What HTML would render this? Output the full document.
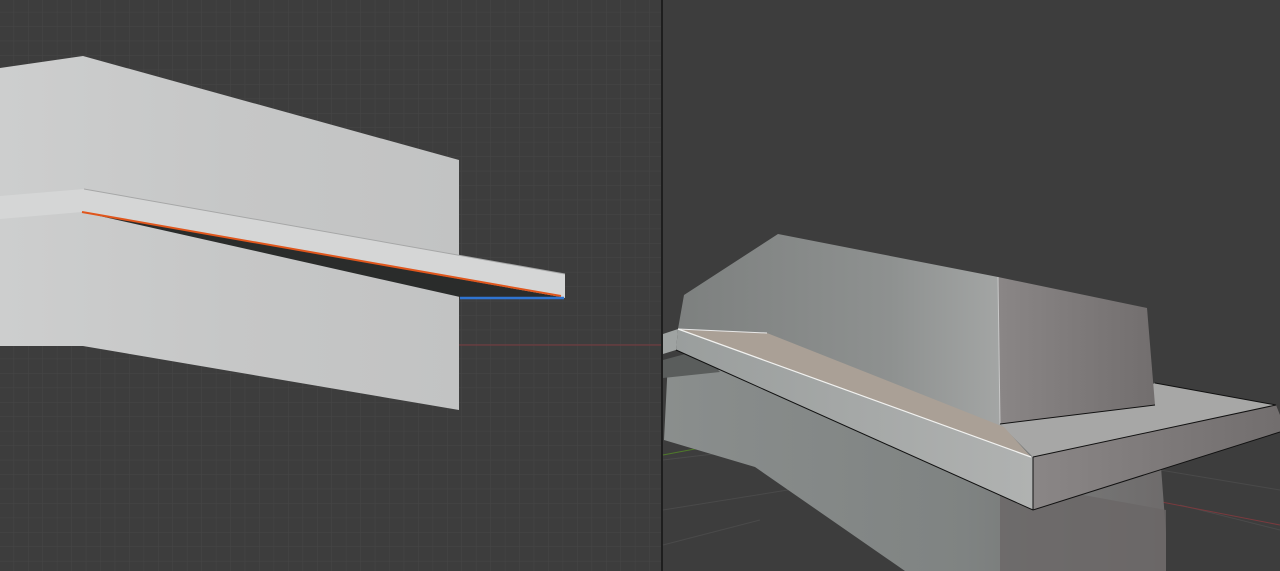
<!DOCTYPE html>
<html><head><meta charset="utf-8"><style>
html,body{margin:0;padding:0;background:#3d3d3d;overflow:hidden;width:1280px;height:571px}
svg{display:block}
</style></head><body>
<svg width="1280" height="571" viewBox="0 0 1280 571" xmlns="http://www.w3.org/2000/svg">
<defs>
<pattern id="g" x="-0.9" y="-2.6" width="14.45" height="14.45" patternUnits="userSpaceOnUse">
<path d="M0 0H14.45M0 0V14.45" stroke="#464646" stroke-width="1" fill="none"/>
</pattern>
<linearGradient id="wall" x1="0" y1="0" x2="1" y2="0">
<stop offset="0" stop-color="#cdcece"/><stop offset="0.5" stop-color="#c6c7c7"/><stop offset="1" stop-color="#c2c3c3"/>
</linearGradient>
<linearGradient id="box1" x1="0" y1="0" x2="1" y2="0">
<stop offset="0" stop-color="#7d807f"/><stop offset="0.6" stop-color="#8e9190"/><stop offset="1" stop-color="#a9abaa"/>
</linearGradient>
<linearGradient id="box2" x1="0" y1="0" x2="1" y2="0">
<stop offset="0" stop-color="#8a8686"/><stop offset="1" stop-color="#726e6e"/>
</linearGradient>
<linearGradient id="front" x1="0" y1="0" x2="1" y2="0">
<stop offset="0" stop-color="#9a9e9d"/><stop offset="1" stop-color="#b0b2b1"/>
</linearGradient>
<linearGradient id="refl" x1="0" y1="0" x2="1" y2="0">
<stop offset="0" stop-color="#8a8e8d"/><stop offset="0.6" stop-color="#7f8382"/><stop offset="1" stop-color="#6e6b6b"/>
</linearGradient>
</defs>
<rect x="0" y="0" width="661" height="571" fill="#3d3d3d"/>
<rect x="0" y="0" width="661" height="571" fill="url(#g)"/>
<line x1="459" y1="345" x2="661" y2="345" stroke="#7a3a3e" stroke-width="1"/>
<polygon points="0,68 83,56 459,160 459,410 83,346 0,346" fill="url(#wall)"/>
<polygon points="82,212 561,297 460,297" fill="#2a2c2b"/>
<polygon points="0,196 84,189 565,274 565,298 561,297 82,212 0,219" fill="#d5d6d6"/>
<line x1="84" y1="189" x2="565" y2="274" stroke="#a6a7a7" stroke-width="1"/>
<line x1="82" y1="212" x2="561" y2="296" stroke="#e0561c" stroke-width="2"/>
<line x1="460" y1="298" x2="564" y2="298" stroke="#2f74d0" stroke-width="2.5"/>
<rect x="661" y="0" width="2" height="571" fill="#1e1e1e"/>
<rect x="663" y="0" width="617" height="571" fill="#3d3d3d"/>
<g stroke="#4a4a4a" stroke-width="1" fill="none">
<line x1="663" y1="460" x2="1000" y2="420"/>
<line x1="663" y1="510" x2="1100" y2="440"/>
<line x1="663" y1="545" x2="760" y2="520"/>
<line x1="1160" y1="470" x2="1280" y2="490"/>
<line x1="1180" y1="505" x2="1280" y2="530"/>
<line x1="1200" y1="440" x2="1280" y2="430"/>
</g>
<line x1="1100" y1="490" x2="1280" y2="525" stroke="#7a3a3e" stroke-width="1"/>
<line x1="663" y1="455" x2="700" y2="448" stroke="#4f7a2a" stroke-width="1"/>
<polygon points="668,360 1000,424 1161,467 1166,533 1166,571 905,571 755,467 664,440" fill="url(#refl)"/>
<polygon points="1000,480 1166,510 1166,571 1000,571" fill="#6a6666" opacity="0.8"/>
<polygon points="663,360 700,350 720,372 663,378" fill="#5a5d5c"/>
<!-- right ledge top (behind box) -->
<polygon points="1000,424 1156,383 1276,405 1033,457" fill="#a7a7a6"/>
<!-- upper box -->
<polygon points="778,234 998,277 1000,424 1031,457 678,329 684,295" fill="url(#box1)"/>
<polygon points="998,277 1147,308 1155,405 1000,424" fill="url(#box2)"/>
<line x1="998" y1="277" x2="1000" y2="424" stroke="#c8c8c8" stroke-width="1"/>
<polygon points="1033,457 1276,405 1280,415 1280,432 1033,510" fill="url(#box2)"/>
<polygon points="678,329 1033,457 1033,510 676,350" fill="url(#front)"/>
<polygon points="678,329 767,333 1004,427 1031,457" fill="#aaa096"/>
<line x1="678" y1="329" x2="1031" y2="457" stroke="#f2f2f0" stroke-width="1.2"/>
<line x1="678" y1="329" x2="767" y2="333" stroke="#e8e8e8" stroke-width="1"/>
<polygon points="663,334 678,329 676,350 663,354" fill="#9fa3a2"/>
<g stroke="#111" stroke-width="1" fill="none">
<polyline points="676,350 1033,510 1280,432"/>
<line x1="1033" y1="457" x2="1033" y2="510"/>
<polyline points="1000,424 1155,405"/>
<polyline points="1155,383 1276,405 1033,457"/>
</g>
</svg>
</body></html>
